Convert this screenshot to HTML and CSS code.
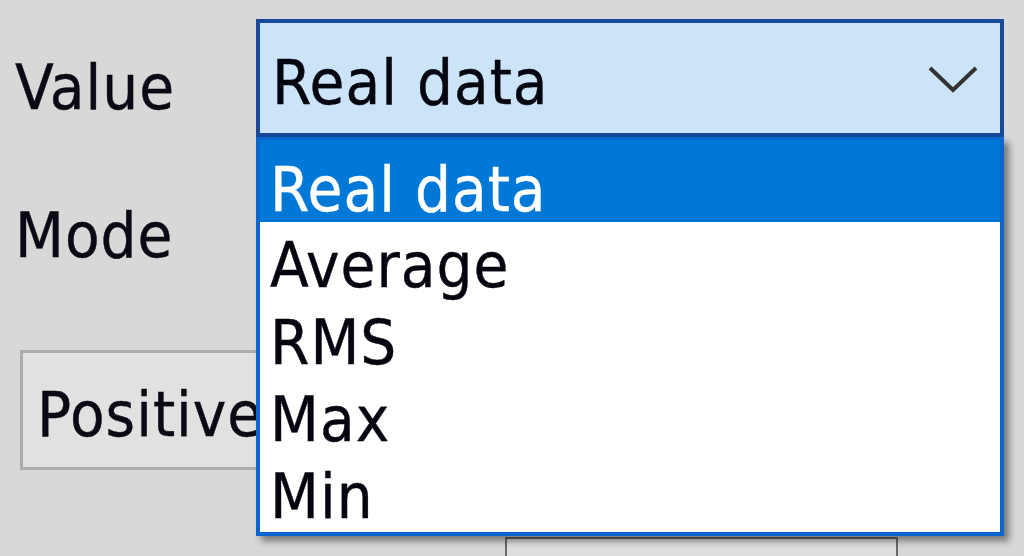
FILE: index.html
```html
<!DOCTYPE html>
<html>
<head>
<meta charset="utf-8">
<link rel="stylesheet" href="styles.css">
</head>
<body>
<div class="dialog">
  <div class="row row-value">
    <div class="label label-value">Value</div>
    <div class="combo-wrap">
      <div class="combo combo-open">
        <span class="combo-text">Real data</span>
        <svg class="chevron" width="52" height="30" viewBox="0 0 52 30">
          <polyline points="3,4 26,26 49,4" fill="none" stroke="#333" stroke-width="4"/>
        </svg>
      </div>
      <ul class="dropdown">
        <li class="item item-first item-selected">Real data</li>
        <li class="item">Average</li>
        <li class="item">RMS</li>
        <li class="item">Max</li>
        <li class="item">Min</li>
      </ul>
    </div>
  </div>
  <div class="row row-mode">
    <div class="label label-mode">Mode</div>
    <div class="combo combo-plain"></div>
  </div>
  <div class="row row-buttons">
    <div class="button button-positive">Positive</div>
  </div>
  <div class="row row-bottom">
    <div class="button button-bottom"></div>
  </div>
</div>
</body>
</html>
```

FILE: styles.css
```css
html, body {
  margin: 0;
  padding: 0;
  width: 1024px;
  height: 556px;
  overflow: hidden;
  background: #d9d8d9;
}

.dialog {
  display: flex;
  flex-direction: column;
  padding-top: 19px;
  font-family: "DejaVu Sans Condensed", "DejaVu Sans", sans-serif;
  font-stretch: condensed;
  font-size: 63px;
  line-height: 64px;
  letter-spacing: 1px;
  color: #0a0a14;
  -webkit-text-stroke: 0.4px currentColor;
}

.row {
  display: flex;
  align-items: flex-start;
}

.label {
  width: 256px;
  box-sizing: border-box;
  padding-left: 15px;
}

.label-value {
  padding-top: 37px;
}

.row-mode {
  margin-top: 30px;
}

.label-mode {
  padding-top: 37px;
}

.combo-wrap {
  position: relative;
  width: 748px;
}

.combo {
  box-sizing: border-box;
  width: 748px;
  height: 118px;
  display: flex;
  align-items: center;
}

.combo-open {
  border: 4px solid #18499a;
  background: #cce4f7;
}

.combo-plain {
  border: 3px solid #adadad;
  background: #e1e1e1;
}

.combo-text {
  padding-top: 10px;
  padding-left: 12px;
  color: #05050f;
}

.chevron {
  margin-left: auto;
  margin-right: 21px;
  margin-top: 2px;
}

.dropdown {
  position: absolute;
  top: 100%;
  left: 0;
  width: 748px;
  box-sizing: border-box;
  margin: 0;
  padding: 0 0 2px 0;
  list-style: none;
  background: #ffffff;
  border: 4px solid #0b66cf;
  border-top-width: 3px;
  box-shadow: 5px 5px 7px rgba(0, 0, 0, 0.45);
  z-index: 2;
}

.item {
  box-sizing: border-box;
  height: 77px;
  padding-top: 12px;
  padding-left: 10px;
  color: #05050f;
}

.item-first {
  height: 82px;
  padding-top: 18px;
}

.item-selected {
  background: #0078d7;
  color: #ffffff;
}

.row-buttons {
  margin-top: 65px;
  padding-left: 20px;
}

.button {
  box-sizing: border-box;
  background: #e1e1e1;
}

.button-positive {
  width: 470px;
  height: 120px;
  border: 3px solid #adadad;
  padding-top: 30px;
  padding-left: 14px;
  color: #0a0a14;
}

.row-bottom {
  margin-top: 67px;
  padding-left: 505px;
}

.button-bottom {
  width: 393px;
  height: 19px;
  border: 2px solid #6a6a6a;
  border-bottom: none;
  background: #dedede;
}
```
